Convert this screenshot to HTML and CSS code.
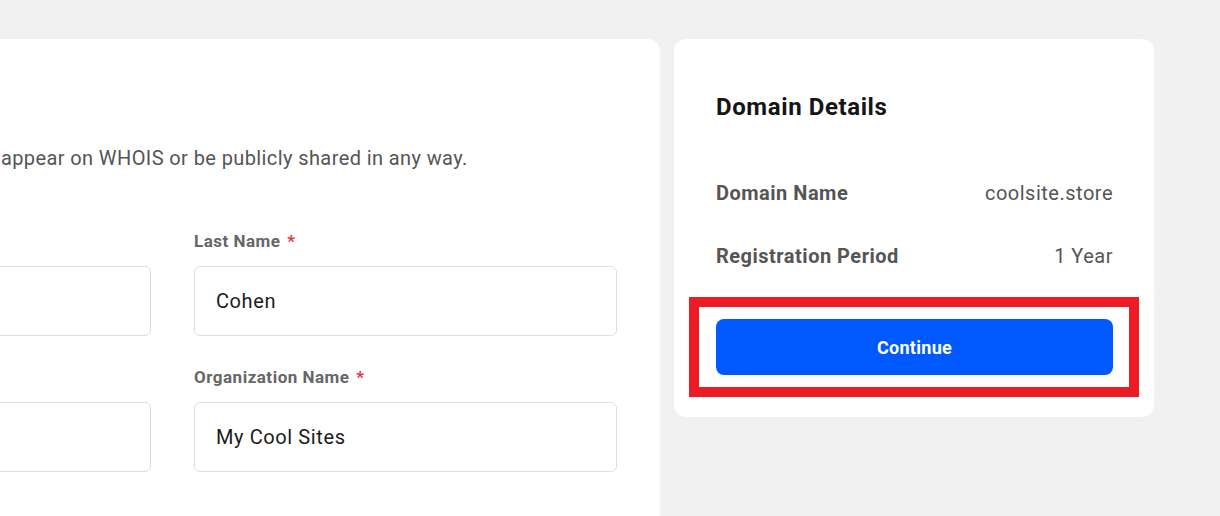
FILE: index.html
```html
<!DOCTYPE html>
<html lang="en">
<head>
<meta charset="utf-8">
<title>Domain Registration</title>
<link rel="stylesheet" href="styles.css">
</head>
<body>
<div class="page">
  <section class="card contact">
    <h2 class="card-title">Contact Details</h2>
    <p class="desc">Your personal details will not appear on WHOIS or be publicly shared in any way.</p>
    <div class="form-grid">
      <div class="field">
        <label class="label">First Name <span class="req">*</span></label>
        <div class="input">Dan</div>
      </div>
      <div class="field">
        <label class="label">Last Name <span class="req">*</span></label>
        <div class="input">Cohen</div>
      </div>
      <div class="field">
        <label class="label">Email <span class="req">*</span></label>
        <div class="input">dan@coolsite.store</div>
      </div>
      <div class="field">
        <label class="label">Organization Name <span class="req">*</span></label>
        <div class="input">My Cool Sites</div>
      </div>
    </div>
  </section>
  <aside class="card summary">
    <h2 class="summary-title">Domain Details</h2>
    <div class="rows">
      <div class="row"><span class="row-key">Domain Name</span><span class="row-val">coolsite.store</span></div>
      <div class="row"><span class="row-key">Registration Period</span><span class="row-val">1 Year</span></div>
    </div>
    <div class="btn-wrap">
      <button class="btn">Continue</button>
      <div class="highlight"></div>
    </div>
  </aside>
</div>
</body>
</html>
```

FILE: styles.css
```css
html, body {
  margin: 0;
  padding: 0;
  overflow: hidden;
  height: 516px;
}
body {
  background: #f1f1f1;
  font-family: Roboto, "Liberation Sans", Arial, sans-serif;
  color: #222;
}
.page {
  display: flex;
  align-items: flex-start;
  gap: 14px;
  padding-top: 39px;
  margin-left: -315px;
}
.card {
  background: #fff;
  border-radius: 12px;
  box-sizing: border-box;
}
.contact {
  width: 975px;
  flex: none;
  padding: 42px 43px 120px;
}
.card-title {
  margin: 12px 0 0;
  font-size: 24px;
  line-height: 29px;
  font-weight: 700;
  letter-spacing: 0.6px;
  color: #151515;
}
.desc {
  margin: 23px 0 0;
  font-size: 20px;
  line-height: 27px;
  letter-spacing: 0.4px;
  color: #555;
  white-space: nowrap;
}
.form-grid {
  margin-top: 57px;
  display: grid;
  grid-template-columns: 1fr 1fr;
  column-gap: 43px;
  row-gap: 29px;
}
.field {
  display: flex;
  flex-direction: column;
}
.label {
  font-size: 17px;
  line-height: 24px;
  font-weight: 700;
  letter-spacing: 0.5px;
  color: #666;
  margin-bottom: 13px;
}
.req {
  color: #e8323c;
  margin-left: 2px;
}
.input {
  height: 70px;
  box-sizing: border-box;
  border: 1px solid #dedede;
  border-radius: 6px;
  padding: 0 21px;
  display: flex;
  align-items: center;
  font-size: 20px;
  letter-spacing: 0.6px;
  color: #1c1c1c;
}
.summary {
  width: 480px;
  flex: none;
  padding: 42px 41px 42px 42px;
}
.summary-title {
  margin: 12px 0 0;
  font-size: 24px;
  line-height: 29px;
  font-weight: 700;
  letter-spacing: 0.6px;
  color: #151515;
}
.rows {
  margin-top: 51px;
  display: flex;
  flex-direction: column;
  gap: 23px;
}
.row {
  height: 40px;
  display: flex;
  align-items: center;
  justify-content: space-between;
  font-size: 20px;
  letter-spacing: 0.5px;
  color: #555;
}
.row-key {
  font-weight: 700;
}
.btn-wrap {
  position: relative;
  margin-top: 43px;
}
.btn {
  display: block;
  width: 100%;
  height: 56px;
  border: none;
  border-radius: 8px;
  background: #0059ff;
  color: #fff;
  font-family: Roboto, "Liberation Sans", Arial, sans-serif;
  font-size: 18px;
  font-weight: 700;
  letter-spacing: 0.3px;
  cursor: pointer;
}
.highlight {
  position: absolute;
  top: -22px;
  bottom: -22px;
  left: -27px;
  right: -26px;
  border: 10px solid #ed1c24;
  pointer-events: none;
}
```
